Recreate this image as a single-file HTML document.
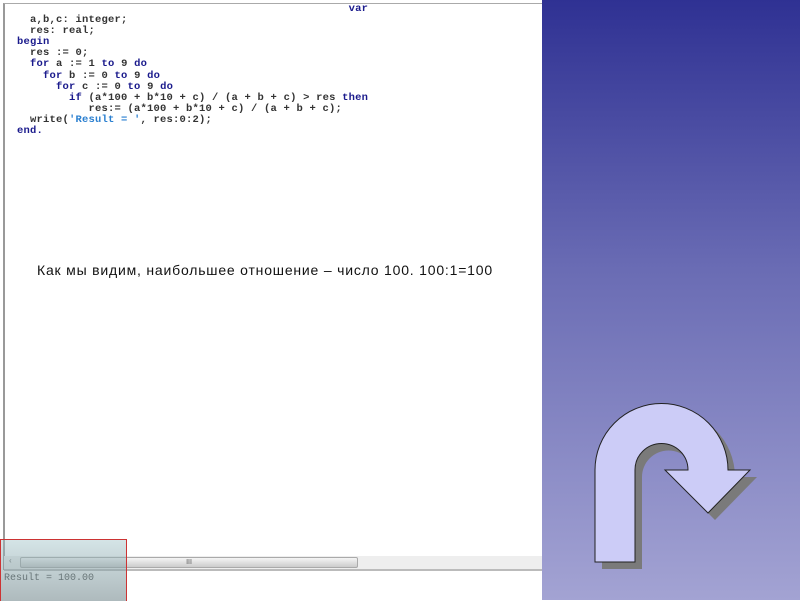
<!DOCTYPE html>
<html><head><meta charset="utf-8"><style>
body{margin:0;width:800px;height:600px;position:relative;overflow:hidden;background:#fff;font-family:"Liberation Sans",sans-serif}
#right{position:absolute;left:542px;top:0;width:258px;height:600px;background:linear-gradient(#2f3193,#6a6cb4 45%,#a3a3d3)}
#code{position:absolute;left:17px;top:4px;font:bold 10.5px/11.1px "Liberation Mono",monospace;color:#333;white-space:pre;letter-spacing:0.2px}
.k{color:#1a1a8c}.s{color:#2a7fd0}
#ed{position:absolute;left:3px;top:3px;width:539px;height:566px;border-left:2px solid #999;border-top:1px solid #aaa}
#msg{position:absolute;left:37px;top:262px;font-size:14px;color:#111;letter-spacing:0.8px}
#sb{position:absolute;left:4px;top:556px;width:538px;height:13px;background:#eee;border-bottom:2px solid #bbb}
#thumb{position:absolute;left:16px;top:1px;width:336px;height:9px;background:linear-gradient(#f5f5f5,#ccc);border:1px solid #aaa;border-radius:2px;font-size:7px;text-align:center;line-height:9px;color:#555}
#out{position:absolute;left:4px;top:573px;font:10px "Liberation Mono",monospace;color:#444}
#red{position:absolute;left:0;top:539px;width:125px;height:61px;border:1px solid #c33;border-bottom:none;background:linear-gradient(rgba(160,195,200,.45),rgba(120,140,145,.6))}
</style></head><body>
<div id="ed"></div>
<div id="code">                                                   <span class="k">var</span>
  a,b,c: integer;
  res: real;
<span class="k">begin</span>
  res := 0;
  <span class="k">for</span> a := 1 <span class="k">to</span> 9 <span class="k">do</span>
    <span class="k">for</span> b := 0 <span class="k">to</span> 9 <span class="k">do</span>
      <span class="k">for</span> c := 0 <span class="k">to</span> 9 <span class="k">do</span>
        <span class="k">if</span> (a*100 + b*10 + c) / (a + b + c) &gt; res <span class="k">then</span>
           res:= (a*100 + b*10 + c) / (a + b + c);
  write(<span class="s">'Result = '</span>, res:0:2);
<span class="k">end.</span></div>
<div id="msg">Как мы видим, наибольшее отношение – число 100. 100:1=100</div>
<div id="sb"><span style="position:absolute;left:5px;top:0;font-size:8px;color:#666">‹</span><div id="thumb">III</div></div>
<div id="out">Result = 100.00</div>
<div id="red"></div>
<div id="right"></div>
<svg width="800" height="600" style="position:absolute;left:0;top:0">
<path d="M602 569 V477 A66.5 66.5 0 0 1 735 477 H757 L715 520 L672 477 H695 A26.5 26.5 0 0 0 642 477 V569 Z" fill="#7a7a7a"/>
<path d="M595 562 V470 A66.5 66.5 0 0 1 728 470 H750 L708 513 L665 470 H688 A26.5 26.5 0 0 0 635 470 V562 Z" fill="#ccccf7" stroke="#222" stroke-width="1"/>
</svg>
</body></html>
